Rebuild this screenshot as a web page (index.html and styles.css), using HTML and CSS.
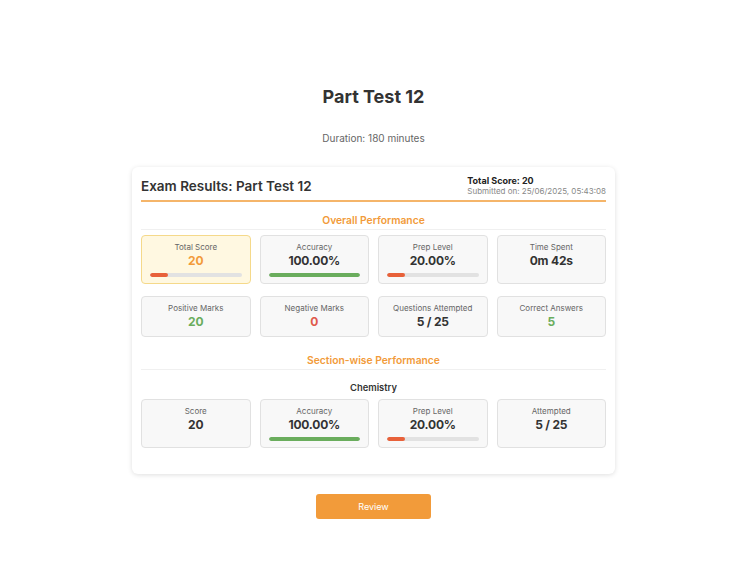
FILE: index.html
```html
<!DOCTYPE html>
<html lang="en">
<head>
<meta charset="utf-8">
<title>Part Test 12</title>
<link rel="stylesheet" href="styles.css">
</head>
<body>
<main class="page">
  <h1 class="title">Part Test 12</h1>
  <p class="duration">Duration: 180 minutes</p>

  <section class="card">
    <header class="card-head">
      <h2 class="card-title">Exam Results: Part Test 12</h2>
      <div class="card-meta">
        <div class="meta-score">Total Score: 20</div>
        <div class="meta-date">Submitted on: 25/06/2025, 05:43:08</div>
      </div>
    </header>

    <h3 class="section-title">Overall Performance</h3>
    <div class="grid">
      <div class="stat stat-hl">
        <div class="stat-label">Total Score</div>
        <div class="stat-value v-orange">20</div>
        <div class="bar"><div class="bar-fill fill-red" style="width:20%"></div></div>
      </div>
      <div class="stat">
        <div class="stat-label">Accuracy</div>
        <div class="stat-value">100.00%</div>
        <div class="bar"><div class="bar-fill fill-green" style="width:100%"></div></div>
      </div>
      <div class="stat">
        <div class="stat-label">Prep Level</div>
        <div class="stat-value">20.00%</div>
        <div class="bar"><div class="bar-fill fill-red" style="width:20%"></div></div>
      </div>
      <div class="stat">
        <div class="stat-label">Time Spent</div>
        <div class="stat-value">0m 42s</div>
      </div>
    </div>
    <div class="grid grid-second">
      <div class="stat">
        <div class="stat-label">Positive Marks</div>
        <div class="stat-value v-green">20</div>
      </div>
      <div class="stat">
        <div class="stat-label">Negative Marks</div>
        <div class="stat-value v-red">0</div>
      </div>
      <div class="stat">
        <div class="stat-label">Questions Attempted</div>
        <div class="stat-value">5 / 25</div>
      </div>
      <div class="stat">
        <div class="stat-label">Correct Answers</div>
        <div class="stat-value v-green">5</div>
      </div>
    </div>

    <h3 class="section-title section-gap">Section-wise Performance</h3>
    <h4 class="subject">Chemistry</h4>
    <div class="grid grid-section">
      <div class="stat">
        <div class="stat-label">Score</div>
        <div class="stat-value">20</div>
      </div>
      <div class="stat">
        <div class="stat-label">Accuracy</div>
        <div class="stat-value">100.00%</div>
        <div class="bar"><div class="bar-fill fill-green" style="width:100%"></div></div>
      </div>
      <div class="stat">
        <div class="stat-label">Prep Level</div>
        <div class="stat-value">20.00%</div>
        <div class="bar"><div class="bar-fill fill-red" style="width:20%"></div></div>
      </div>
      <div class="stat">
        <div class="stat-label">Attempted</div>
        <div class="stat-value">5 / 25</div>
      </div>
    </div>
  </section>

  <div class="actions">
    <button class="btn" type="button">Review</button>
  </div>
</main>
</body>
</html>
```

FILE: styles.css
```css
* { box-sizing: border-box; }
html, body { margin: 0; padding: 0; background: #fff; }
body {
  font-family: Inter, "Noto Sans", "Liberation Sans", sans-serif;
  color: #333;
  padding-right: 3px;
}
.page {
  width: 483px;
  margin: 0 auto;
  padding-top: 86px;
}
.title {
  margin: 0;
  text-align: center;
  font-size: 18px;
  line-height: 22px;
  font-weight: 700;
  color: #333;
}
.duration {
  margin: 23px 0 0;
  text-align: center;
  font-size: 10px;
  line-height: 14px;
  color: #666;
}
.card {
  margin-top: 22px;
  background: #fff;
  border-radius: 6px;
  box-shadow: 0 1px 5px rgba(0,0,0,0.13);
  padding: 9px 9px 26px;
}
.card-head {
  display: flex;
  justify-content: space-between;
  align-items: center;
  padding-bottom: 4px;
  border-bottom: 2px solid #f5b56a;
}
.card-title {
  margin: 0;
  font-size: 13.5px;
  line-height: 20px;
  font-weight: 600;
  color: #333;
}
.card-meta { text-align: left; }
.meta-score {
  font-size: 9px;
  line-height: 10px;
  font-weight: 700;
  color: #222;
}
.meta-date {
  font-size: 8px;
  line-height: 10px;
  color: #888;
}
.section-title {
  margin: 11px 0 0;
  padding-bottom: 2px;
  border-bottom: 1px solid #f0f0f0;
  text-align: center;
  font-size: 10.3px;
  line-height: 14px;
  font-weight: 600;
  color: #f29b3a;
}
.section-gap { margin-top: 16px; }
.grid {
  display: grid;
  grid-template-columns: repeat(4, 1fr);
  gap: 9px;
  margin-top: 5px;
}
.grid-second { margin-top: 12px; }
.grid-section { margin-top: 5px; }
.stat {
  background: #f8f8f8;
  border: 1px solid #e1e1e1;
  border-radius: 4px;
  padding: 6px 8px;
  text-align: center;
}
.stat-hl {
  background: #fff8e1;
  border-color: #f5d98a;
}
.stat-label {
  font-size: 8px;
  line-height: 11px;
  color: #666;
}
.stat-value {
  font-size: 12px;
  line-height: 16px;
  font-weight: 700;
  letter-spacing: -0.2px;
  color: #333;
}
.v-orange { color: #f29b3a; }
.v-green { color: #6aad5d; }
.v-red { color: #e05a4a; }
.bar {
  margin-top: 4px;
  height: 4px;
  border-radius: 2px;
  background: #e2e2e2;
  overflow: hidden;
}
.bar-fill { height: 100%; border-radius: 2px; }
.fill-red { background: #e8613a; }
.fill-green { background: #6aad5d; }
.subject {
  margin: 11px 0 0;
  text-align: center;
  font-size: 9.4px;
  line-height: 13px;
  font-weight: 600;
  color: #333;
}
.actions {
  display: flex;
  justify-content: center;
  margin-top: 20px;
}
.btn {
  width: 115px;
  height: 25px;
  border: none;
  border-radius: 3px;
  background: #f29b3a;
  color: #fff;
  font-family: inherit;
  font-size: 9px;
  cursor: pointer;
}
```
